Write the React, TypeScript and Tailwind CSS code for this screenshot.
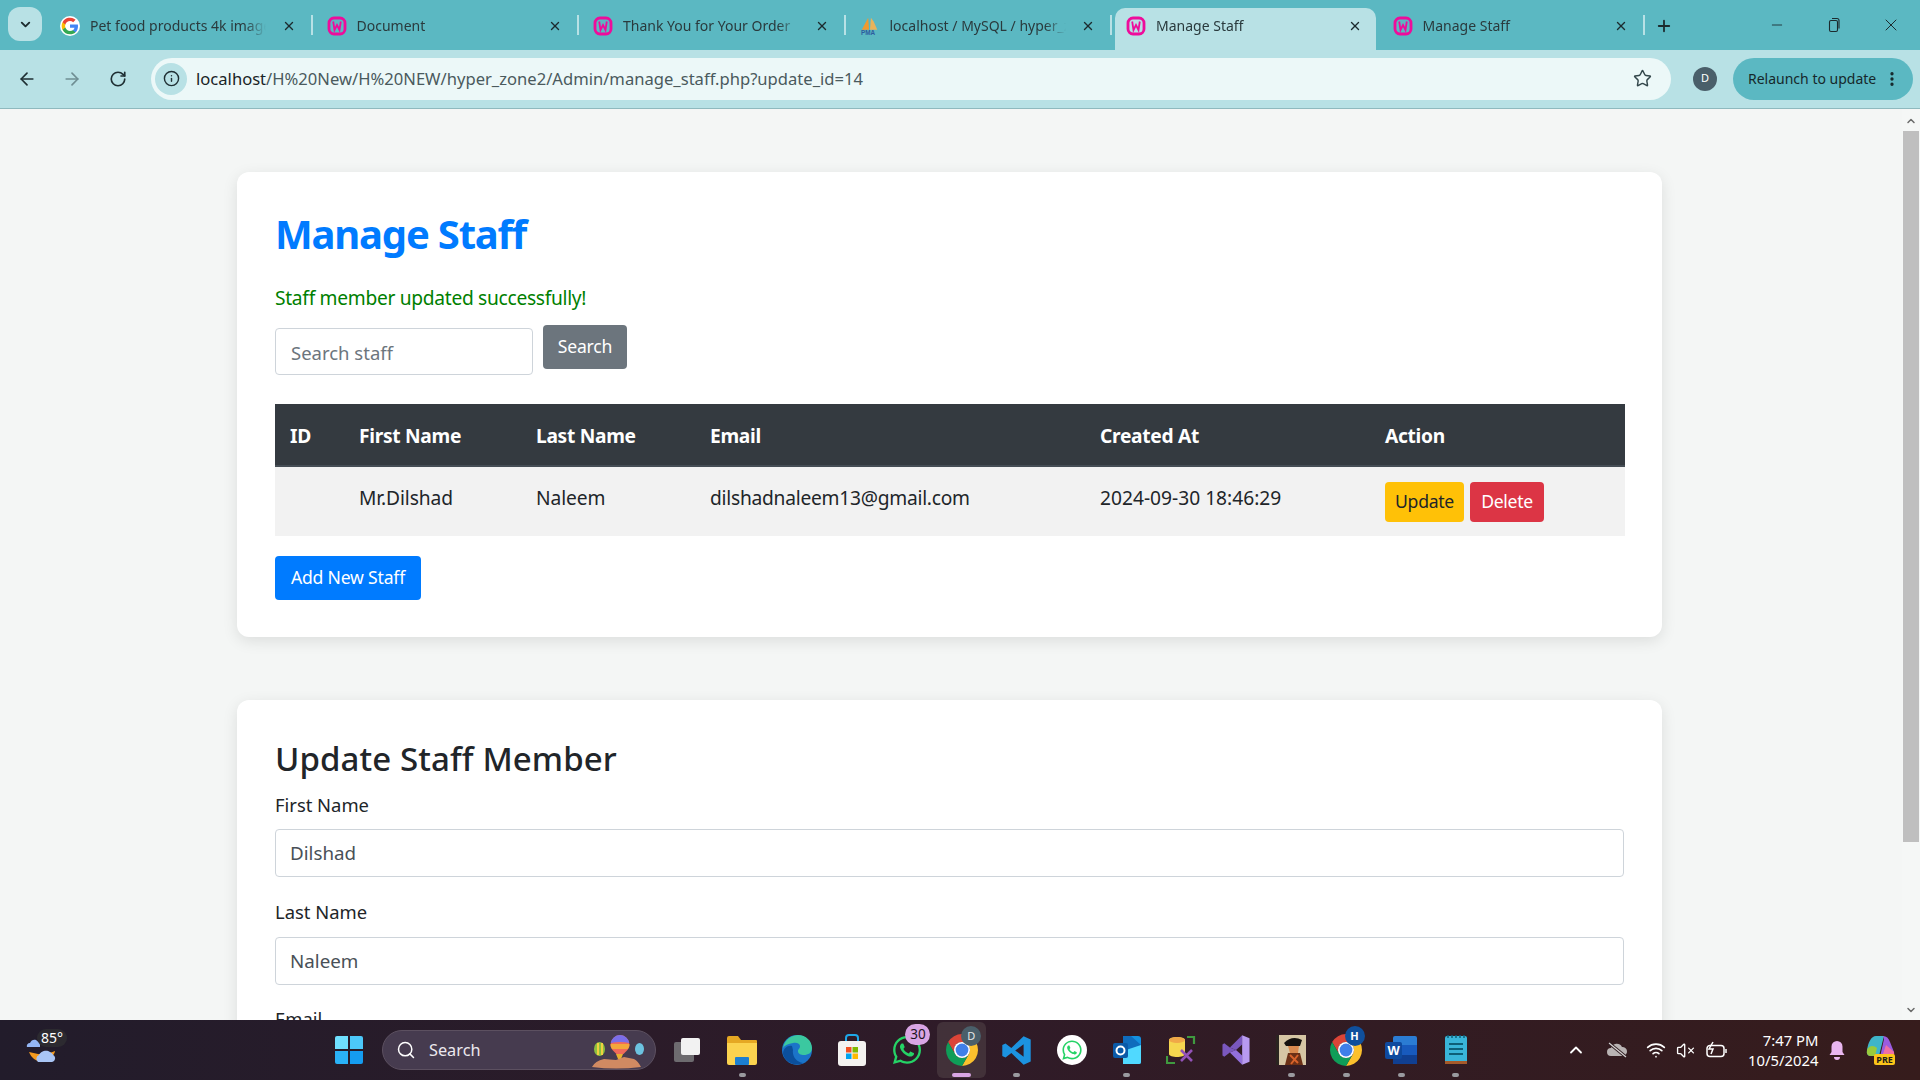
import React from 'react';
import { ArrowLeft, ArrowRight, ChevronDown, ChevronUp, Info, Minus, MoreVertical, Plus, RotateCw, Search, Star, VolumeX, Wifi, X } from 'lucide-react';
import { FaWhatsapp } from 'react-icons/fa';

const font = 'font-["Noto_Sans",sans-serif]';

function WampIcon() {
    return (
        <svg width="20" height="20" viewBox="0 0 20 20" fill="none">
            <rect x="2" y="2" width="16" height="16" rx="5" stroke="#ee0c9b" strokeWidth="2.8" />
            <path d="M6.2 5.5l1.3 8.5 2.5-5 2.5 5 1.3-8.5" stroke="#ee0c9b" strokeWidth="1.8" />
        </svg>
    );
}

function GoogleIcon() {
    return (
        <svg width="20" height="20" viewBox="0 0 24 24">
            <circle cx="12" cy="12" r="12" fill="#fff" />
            <path fill="#4285F4" d="M21.6 12.2c0-.7-.1-1.4-.2-2H12v3.8h5.4a4.6 4.6 0 0 1-2 3v2.5h3.2c1.9-1.7 3-4.3 3-7.3z" />
            <path fill="#34A853" d="M12 22c2.7 0 5-.9 6.6-2.5l-3.2-2.5c-.9.6-2 1-3.4 1-2.6 0-4.8-1.8-5.6-4.1H3.1v2.6A10 10 0 0 0 12 22z" />
            <path fill="#FBBC05" d="M6.4 13.9a6 6 0 0 1 0-3.8V7.5H3.1a10 10 0 0 0 0 9z" />
            <path fill="#EA4335" d="M12 6c1.5 0 2.8.5 3.8 1.5l2.9-2.9A10 10 0 0 0 3.1 7.5l3.3 2.6C7.2 7.8 9.4 6 12 6z" />
        </svg>
    );
}

function PmaIcon() {
    return (
        <svg width="22" height="20" viewBox="0 0 22 20">
            <path d="M2 14L9 1l1 13z" fill="#f29a2e" />
            <path d="M11 14l1-13 3 4 4 9z" fill="#e9b35a" />
            <text x="1" y="19.5" fontSize="7" fontWeight="700" fill="#2d5c9e" fontFamily="Liberation Sans, sans-serif">PMA</text>
        </svg>
    );
}

function ChromeIcon({ size = 32 }: { size?: number }) {
    return (
        <svg width={size} height={size} viewBox="2 2 20 20">
            <path fill="#db4437" d="M3.34 7A10 10 0 0 1 20.66 7H12A5 5 0 0 0 7.67 14.5Z" />
            <path fill="#fbc02d" d="M20.66 7A10 10 0 0 1 12 22L16.33 14.5A5 5 0 0 0 12 7Z" />
            <path fill="#0f9d58" d="M12 22A10 10 0 0 1 3.34 7L7.67 14.5A5 5 0 0 0 16.33 14.5Z" />
            <circle cx="12" cy="12" r="5" fill="#fff" />
            <circle cx="12" cy="12" r="4" fill="#3f7fe8" />
        </svg>
    );
}

function Tab({ icon, title, active }: { icon: React.ReactNode; title: string; active?: boolean }) {
    return (
        <div className={`relative flex h-[42px] shrink-0 items-center pb-[7px] ${active ? 'mx-[3px] w-[260.5px] rounded-t-[10px] bg-[#b8e1e5] pl-[11px] pr-[14px]' : 'w-[266.5px] pl-[14px] pr-[17px]'}`}>
            <span className="flex w-[20px] shrink-0 justify-center">{icon}</span>
            <span className="ml-[10px] w-[176px] overflow-hidden whitespace-nowrap text-[14px] text-[#2a3a3d] [mask-image:linear-gradient(to_right,black_88%,transparent)]">{title}</span>
            <X size={14} strokeWidth={2.4} className="ml-auto text-[#1c2b2e]" />
            {!active && <span className="absolute right-0 top-[7px] h-[20px] w-[2px] bg-[#b8e1e5]" />}
        </div>
    );
}

function TaskIcon({ children, dot, className }: { children: React.ReactNode; dot?: boolean; className?: string }) {
    return (
        <div className={`relative flex h-[60px] w-[54.9px] shrink-0 items-center justify-center ${className ?? ''}`}>
            {children}
            {dot && <span className="absolute bottom-[3px] h-[4px] w-[7px] rounded-full bg-[#9a9a9f]" />}
        </div>
    );
}

function Field({ label, value, labelClass }: { label: string; value: string; labelClass: string }) {
    return (
        <>
            <label className={`block h-[24px] text-[18.4px] leading-[24px] text-[#212529] ${labelClass}`}>{label}</label>
            <input
                readOnly
                value={value}
                className="h-[48px] w-full rounded-[4px] border border-[#ced4da] bg-white px-[14px] text-[18.8px] text-[#495057] outline-none"
            />
        </>
    );
}

export default function App() {
    return (
        <div className={`flex h-screen w-full flex-col overflow-hidden bg-[#f4f6f5] ${font}`}>
            {/* Tab strip */}
            <div className="flex h-[50px] shrink-0 items-end bg-[#5bb8c2]">
                <div className="flex h-[50px] w-[46px] shrink-0 items-center justify-end pr-[4px]">
                    <div className="mb-[2px] flex h-[34px] w-[34px] items-center justify-center rounded-[12px] bg-[#b8e1e5]">
                        <ChevronDown size={15} strokeWidth={3} className="text-[#1c2b2e]" />
                    </div>
                </div>
                <Tab icon={<GoogleIcon />} title="Pet food products 4k images" />
                <Tab icon={<WampIcon />} title="Document" />
                <Tab icon={<WampIcon />} title="Thank You for Your Order" />
                <Tab icon={<PmaIcon />} title="localhost / MySQL / hyper_zone2" />
                <Tab icon={<WampIcon />} title="Manage Staff" active />
                <Tab icon={<WampIcon />} title="Manage Staff" />
                <div className="mb-[15px] ml-[10px] flex items-center text-[#1c2b2e]">
                    <Plus size={18} strokeWidth={2.4} />
                </div>
                <div className="mb-[15px] ml-auto flex items-center text-[#1c2b2e]">
                    <Minus size={16} strokeWidth={1.3} className="mr-[42px]" />
                    <svg width="14" height="16" viewBox="0 0 14 16" fill="none" stroke="#1c2b2e" strokeWidth="1.1" className="mr-[40px]">
                        <rect x="2.5" y="3.5" width="8" height="11" rx="1.5" />
                        <path d="M5 1.5h5a2 2 0 0 1 2 2v8" />
                    </svg>
                    <X size={20} strokeWidth={1.2} className="mr-[19px]" />
                </div>
            </div>

            {/* Toolbar */}
            <div className="flex h-[59px] shrink-0 items-center border-b border-[#8fb9be] bg-[#b8e1e5] pb-[1px]">
                <ArrowLeft size={20} strokeWidth={2} className="ml-[17px] text-[#1f2f33]" />
                <ArrowRight size={20} strokeWidth={2} className="ml-[25px] text-[#6f8e93]" />
                <RotateCw size={18} strokeWidth={2.2} className="ml-[27px] text-[#1f2f33]" />
                <div className="ml-[24px] flex h-[42px] w-[1520px] shrink-0 items-center rounded-full bg-[#ecf8f8] pl-[4px] pr-[19px]">
                    <div className="flex h-[32px] w-[32px] items-center justify-center rounded-full bg-[#b8e1e5]">
                        <Info size={17} strokeWidth={2} className="text-[#1f2f33]" />
                    </div>
                    <div className="ml-[9px] mt-[2px] whitespace-nowrap text-[16.6px] text-[#4a5a5d]">
                        <span className="text-[#1a2426]">localhost</span>/H%20New/H%20NEW/hyper_zone2/Admin/manage_staff.php?update_id=14
                    </div>
                    <Star size={19} strokeWidth={1.8} className="ml-auto text-[#33474b]" />
                </div>
                <div className="ml-[22px] flex h-[24px] w-[24px] shrink-0 items-center justify-center rounded-full bg-[#4a5f6a] text-[11px] text-white">D</div>
                <div className="ml-[16px] flex h-[42px] w-[180px] shrink-0 items-center rounded-full bg-[#5bb8c2] pl-[15px] text-[14px] text-[#16282b]">
                    <span className="whitespace-nowrap">Relaunch to update</span>
                    <MoreVertical size={18} strokeWidth={2.4} className="ml-[7px] text-[#16282b]" />
                </div>
            </div>

            {/* Page */}
            <div className="flex min-h-0 flex-1 overflow-hidden">
                <div className="min-w-0 flex-1 overflow-hidden pl-[237px] pr-[240px] pt-[63px]">
                    <div className="rounded-[12px] bg-white px-[38px] pb-[37px] pt-[38px] shadow-[0_4px_15px_rgba(0,0,0,0.1)]">
                        <h1 className="text-[40px] font-bold leading-[48px] tracking-[-1.2px] text-[#007bff]">Manage Staff</h1>
                        <p className="mt-[26px] h-[27px] text-[19.2px] leading-[27px] tracking-[-0.3px] text-[#008000]">Staff member updated successfully!</p>
                        <div className="mt-[14px] flex items-start gap-[10px]">
                            <input
                                placeholder="Search staff"
                                className="mt-[3px] h-[47px] w-[258px] rounded-[4px] border border-[#ced4da] bg-white px-[15px] pt-[1px] text-[18.5px] outline-none placeholder:text-[#6c757d]"
                            />
                            <button className="h-[44px] w-[84px] rounded-[4px] bg-[#6c757d] pb-[1px] text-[17.6px] tracking-[-0.2px] text-white">Search</button>
                        </div>
                        <table className="mt-[29px] w-full table-fixed border-collapse text-left text-[19.2px]">
                            <colgroup>
                                <col className="w-[69px]" />
                                <col className="w-[177px]" />
                                <col className="w-[174px]" />
                                <col className="w-[390px]" />
                                <col className="w-[285px]" />
                                <col className="w-[255px]" />
                            </colgroup>
                            <thead>
                                <tr className="h-[62px] border-b-2 border-[#454d55] bg-[#343a40] text-white">
                                    {['ID', 'First Name', 'Last Name', 'Email', 'Created At', 'Action'].map((h) => (
                                        <th key={h} className="px-[15px] pt-[3px] font-bold tracking-[-0.3px]">{h}</th>
                                    ))}
                                </tr>
                            </thead>
                            <tbody>
                                <tr className="h-[70px] bg-[#f2f2f2] text-[#212529]">
                                    <td className="px-[15px]"></td>
                                    <td className="px-[15px] pb-[6px] tracking-[-0.1px]">Mr.Dilshad</td>
                                    <td className="px-[15px] pb-[6px] tracking-[-0.1px]">Naleem</td>
                                    <td className="px-[15px] pb-[6px] tracking-[-0.25px]">dilshadnaleem13@gmail.com</td>
                                    <td className="px-[15px] pb-[6px]">2024-09-30 18:46:29</td>
                                    <td className="px-[15px]">
                                        <div className="flex gap-[6px]">
                                            <button className="h-[40px] w-[79px] rounded-[4px] bg-[#ffc107] text-[17.6px] tracking-[-0.3px] text-[#212529]">Update</button>
                                            <button className="h-[40px] w-[74px] rounded-[4px] bg-[#dc3545] text-[17.6px] tracking-[-0.3px] text-white">Delete</button>
                                        </div>
                                    </td>
                                </tr>
                            </tbody>
                        </table>
                        <button className="mt-[20px] h-[44px] w-[146px] rounded-[4px] bg-[#007bff] pb-[1px] text-[17.6px] tracking-[-0.2px] text-white">Add New Staff</button>
                    </div>

                    <div className="mt-[63px] rounded-[12px] bg-white px-[38px] pt-[40px] shadow-[0_4px_15px_rgba(0,0,0,0.1)]">
                        <h2 className="text-[33px] font-medium leading-[38px] tracking-[0.1px] text-[#212529]">Update Staff Member</h2>
                        <div className="mt-[15px]">
                            <Field label="First Name" value="Dilshad" labelClass="mb-[12px]" />
                        </div>
                        <div className="mt-[23px]">
                            <Field label="Last Name" value="Naleem" labelClass="mb-[13px]" />
                        </div>
                        <div className="mt-[22px]">
                            <Field label="Email" value="" labelClass="mb-[12px]" />
                        </div>
                    </div>
                </div>

                {/* Scrollbar */}
                <div className="flex w-[18px] shrink-0 flex-col items-center bg-[#f5f7f6]">
                    <ChevronUp size={12} strokeWidth={3} className="mt-[6px] text-[#6b6b6b]" />
                    <div className="mt-[4px] h-[711px] w-[16px] bg-[#bfbfbf]" />
                    <ChevronDown size={12} strokeWidth={3} className="mt-[162px] text-[#6b6b6b]" />
                </div>
            </div>

            {/* Taskbar */}
            <div className="relative flex h-[60px] shrink-0 items-center bg-gradient-to-r from-[#221c2b] via-[#2f1b28] to-[#361c1c] text-white">
                {/* Weather */}
                <div className="relative ml-[26px] h-[40px] w-[36px] shrink-0">
                    <svg width="36" height="36" viewBox="0 0 36 36" className="absolute left-0 top-[5px]">
                        <path d="M1 12a3 3 0 0 1 3-4c1-3 4-4 6-3 1 1 3 2 4 3v4z" fill="#94b6f4" />
                        <path d="M3 17c3 8 11 12 19 8 4-2 7-7 7-9-7 3-12 3-17 3z" fill="#f49a1d" />
                        <path d="M12 27a4 4 0 0 1 1-7c1-3 7-6 11-3 2 1 3 2 3 3 3 1 3 6-1 7z" fill="#a9c5f5" />
                    </svg>
                    <span className="absolute left-[11px] top-[-1px] flex h-[18px] items-center rounded-full bg-[#2c2a30] px-[4px] text-[14px] leading-[18px]">85°</span>
                </div>

                {/* Start */}
                <div className="ml-[273px] grid h-[28px] w-[28px] shrink-0 grid-cols-2 gap-[2px]">
                    <span className="rounded-tl-[2px] bg-[#6fe0ff]" />
                    <span className="rounded-tr-[2px] bg-[#4cc8fa]" />
                    <span className="rounded-bl-[2px] bg-[#2ab2f7]" />
                    <span className="rounded-br-[2px] bg-[#159cf0]" />
                </div>

                {/* Search pill */}
                <div className="relative ml-[19px] flex h-[40px] w-[274px] shrink-0 items-center rounded-full border border-[#5c5060] bg-[#463b4f] pl-[13px]">
                    <Search size={20} strokeWidth={1.8} className="text-white" />
                    <span className="ml-[13px] text-[16.3px] text-[#ece8ee]">Search</span>
                    <svg width="60" height="40" viewBox="0 0 60 40" className="absolute right-[6px] top-[-1px]">
                        <ellipse cx="10.5" cy="19" rx="5.5" ry="7" fill="#8cbf3f" />
                        <path d="M8 13h2v12H8zM12 13h2v12h-2z" fill="#f0d040" />
                        <path d="M21.5 15a9.5 10 0 0 1 19 0c0 4-4 7-6 9h-7c-2-2-6-5-6-9z" fill="#f06a5a" />
                        <path d="M21.6 14h18.800c0 2-.5 3.500-1.500 5H23c-1-1.500-1.400-3-1.400-5z" fill="#f3a63c" />
                        <path d="M21.7 13a9.500 10 0 0 1 18.600 0q-9.300-2-18.600 0z" fill="#7a6ee8" />
                        <path d="M27 24h7l-2 5h-3z" fill="#e8b030" />
                        <ellipse cx="50.5" cy="19" rx="4.5" ry="6" fill="#6cc3e0" />
                        <path d="M3 37q3-6 12-8l12 1 8-3 10 2q4 2 7 8-25 3-49 0z" fill="#d08a62" />
                    </svg>
                </div>

                {/* Pinned apps */}
                <div className="ml-[4px] flex items-center">
                    <TaskIcon>
                        <div className="relative h-[24px] w-[26px]">
                            <div className="absolute bottom-0 left-0 h-[20px] w-[20px] rounded-[2px] bg-[#6d6b6f]" />
                            <div className="absolute right-0 top-0 h-[17px] w-[19px] rounded-[2px] bg-[#f2f2f2]" />
                        </div>
                    </TaskIcon>
                    <TaskIcon dot>
                        <svg width="32" height="30" viewBox="0 0 32 30">
                            <path d="M1 3a2 2 0 0 1 2-2h9l3 4h15a1 1 0 0 1 1 1v4H1z" fill="#e5a823" />
                            <path d="M1 8h30v20a2 2 0 0 1-2 2H3a2 2 0 0 1-2-2z" fill="#fbd34f" />
                            <rect x="9" y="22" width="14" height="8" rx="1" fill="#1c7fd0" />
                        </svg>
                    </TaskIcon>
                    <TaskIcon>
                        <svg width="32" height="32" viewBox="0 0 32 32">
                            <circle cx="16" cy="16" r="15" fill="#1b74c9" />
                            <path d="M2 14C4 4 12 1 17 1c8 0 14 6 14 13 0 5-4 7-8 7-3 0-6-1-6-4 0-2 2-2 2-5 0-2-3-4-7-3C7 10 4 11 2 14z" fill="#3bc8a0" />
                            <path d="M12 16c-1 6 3 12 10 13-8 4-18-1-20-9 0-6 5-9 9-8z" fill="#0b4f9c" />
                        </svg>
                    </TaskIcon>
                    <TaskIcon>
                        <svg width="30" height="34" viewBox="0 0 30 34">
                            <path d="M9 8V5a3 3 0 0 1 3-3h6a3 3 0 0 1 3 3v3" fill="none" stroke="#1ea7e8" strokeWidth="2" />
                            <rect x="1" y="8" width="28" height="25" rx="3" fill="#f4f2f0" />
                            <rect x="9" y="14" width="5.5" height="5.5" fill="#f25022" />
                            <rect x="15.5" y="14" width="5.5" height="5.5" fill="#7fba00" />
                            <rect x="9" y="20.5" width="5.5" height="5.5" fill="#00a4ef" />
                            <rect x="15.5" y="20.5" width="5.5" height="5.5" fill="#ffb900" />
                        </svg>
                    </TaskIcon>
                    <TaskIcon>
                        <FaWhatsapp size={32} color="#25d366" />
                        <span className="absolute right-[4px] top-[4px] flex h-[21px] w-[25px] items-center justify-center rounded-full bg-[#d9a5e4] text-[13.5px] text-[#1c1420]">30</span>
                    </TaskIcon>
                    <TaskIcon>
                        <div className="absolute inset-x-[3px] inset-y-[2px] rounded-[6px] bg-[#4a3b40]/70" />
                        <div className="relative"><ChromeIcon /></div>
                        <span className="absolute right-[8px] top-[6px] flex h-[20px] w-[20px] items-center justify-center rounded-full bg-[#4a5f6a] text-[11px] text-[#e6e6e6]">D</span>
                        <span className="absolute bottom-[3px] h-[4px] w-[19px] rounded-full bg-[#d9a5e4]" />
                    </TaskIcon>
                    <TaskIcon dot>
                        <svg width="31" height="31" viewBox="0 0 24 24">
                            <path fillRule="evenodd" fill="#1c93e0" d="M23 3.5L17.5 1 8 10 3.5 6.5 1 7.8v8.4l2.5 1.3L8 14l9.5 9 5.5-2.5zM17.5 7.2L11 12l6.5 4.8z" />
                        </svg>
                    </TaskIcon>
                    <TaskIcon>
                        <div className="flex h-[30px] w-[30px] items-center justify-center rounded-full bg-white">
                            <FaWhatsapp size={22} color="#25d366" />
                        </div>
                    </TaskIcon>
                    <TaskIcon dot>
                        <svg width="30" height="30" viewBox="0 0 30 30">
                            <path d="M11 1h15a3 3 0 0 1 3 3v23a2 2 0 0 1-2 2H11z" fill="#1490df" />
                            <path d="M11 1l8 0 10 9v8H11z" fill="#0f6cbd" />
                            <path d="M11 16l18-6v17a2 2 0 0 1-2 2H11z" fill="#50d9ff" />
                            <rect x="1" y="8" width="15" height="15" rx="2" fill="#0a5aa8" />
                            <circle cx="8.5" cy="15.5" r="4" fill="none" stroke="#fff" strokeWidth="2" />
                        </svg>
                    </TaskIcon>
                    <TaskIcon>
                        <svg width="30" height="30" viewBox="0 0 30 30">
                            <path d="M3 5c0-4 16-4 16 0v14c0 4-16 4-16 0z" fill="#f5d64f" />
                            <ellipse cx="11" cy="5" rx="8" ry="3" fill="#f0a848" />
                            <path d="M21 2h7v7M1 21v7h8" fill="none" stroke="#3f9a3f" strokeWidth="2.2" />
                            <path d="M15 26l11-11M15 15l11 11" stroke="#9352b8" strokeWidth="2.6" />
                        </svg>
                    </TaskIcon>
                    <TaskIcon>
                        <svg width="30" height="32" viewBox="0 0 24 26">
                            <path fill="#7a58be" d="M1 8.5L2.5 7.5 7 11 12 13 7 15 2.5 18.5 1 17.5z" />
                            <path fill="#7a58be" d="M7 11L17 1v7.5L12 13z" />
                            <path fill="#9370dc" d="M7 15L17 25v-7.5L12 13z" />
                            <path fill="#b89af0" d="M17 1l6 2.5v19L17 25z" />
                        </svg>
                    </TaskIcon>
                    <TaskIcon dot>
                        <svg width="30" height="30" viewBox="0 0 30 30">
                            <rect width="30" height="30" fill="#d6c6a4" />
                            <path d="M0 0h3v30H0z" fill="#2a2420" />
                            <path d="M8 8q8-8 18-3l-2 6H10z" fill="#15110e" />
                            <path d="M12 11h11l-1 7h-8z" fill="#d98a4e" />
                            <path d="M9 30l3-12h12l3 12z" fill="#6b3016" />
                            <path d="M14 20l8 8M22 20l-7 9" stroke="#d8622a" strokeWidth="2" />
                        </svg>
                    </TaskIcon>
                    <TaskIcon dot>
                        <ChromeIcon />
                        <span className="absolute right-[9px] top-[6px] flex h-[20px] w-[20px] items-center justify-center rounded-full bg-[#0f4f9c] text-[11px] font-bold text-white">H</span>
                    </TaskIcon>
                    <TaskIcon dot>
                        <svg width="32" height="30" viewBox="0 0 32 30">
                            <rect x="8" y="1" width="24" height="28" rx="2" fill="#2b7cd3" />
                            <rect x="8" y="10" width="24" height="10" fill="#185abd" />
                            <rect x="8" y="20" width="24" height="9" fill="#103f91" />
                            <rect x="0" y="7" width="17" height="17" rx="2" fill="#0f4a9e" />
                            <text x="2.5" y="20" fontSize="13" fontWeight="700" fill="#fff" fontFamily="Liberation Sans, sans-serif">W</text>
                        </svg>
                    </TaskIcon>
                    <TaskIcon dot>
                        <svg width="24" height="32" viewBox="0 0 24 32">
                            <rect x="1" y="2" width="22" height="28" rx="2" fill="#39b5d9" />
                            <rect x="1" y="27" width="22" height="3" fill="#a55a2a" />
                            <path d="M5 10h14M5 15h14M5 20h14" stroke="#0d5f78" strokeWidth="2" />
                            <path d="M4 1v3M8 1v3M12 1v3M16 1v3M20 1v3" stroke="#0d5f78" strokeWidth="1.5" />
                        </svg>
                    </TaskIcon>
                </div>

                {/* System tray */}
                <div className="ml-[83px] flex items-center">
                    <ChevronUp size={20} strokeWidth={2.2} className="text-white" />
                    <svg width="22" height="16" viewBox="0 0 22 16" className="ml-[20px]">
                        <path d="M5 14a4 4 0 0 1 0-8 6 6 0 0 1 11-1 4.5 4.5 0 0 1 1 9z" fill="#b9b3b3" />
                        <path d="M3 1l17 14" stroke="#2f1c20" strokeWidth="3" />
                        <path d="M3 1l17 14" stroke="#d8d4d4" strokeWidth="1.2" />
                    </svg>
                    <Wifi size={20} strokeWidth={2} className="ml-[18px] text-white" />
                    <VolumeX size={19} strokeWidth={1.7} className="ml-[10px] text-white" />
                    <svg width="22" height="18" viewBox="0 0 22 18" fill="none" stroke="#fff" strokeWidth="1.5" className="ml-[11px]">
                        <rect x="1" y="4.5" width="17" height="11" rx="3" />
                        <path d="M20 8v4" />
                        <path d="M7 1L3 8h4l-2 5" />
                    </svg>
                </div>
                <div className="ml-[18px] w-[72px] whitespace-nowrap text-right text-[14.8px] leading-[20px] text-white">
                    <div>7:47 PM</div>
                    <div>10/5/2024</div>
                </div>
                <svg width="18" height="20" viewBox="0 0 18 20" fill="#e9b6ef" className="ml-[10px]">
                    <path d="M9 1a5.5 5.5 0 0 1 5.5 5.5V12l2 3H1.5l2-3V6.5A5.5 5.5 0 0 1 9 1z" />
                    <path d="M6 17h6a3 3 0 0 1-6 0z" />
                </svg>
                <div className="relative ml-[20px] h-[30px] w-[30px]">
                    <svg width="30" height="26" viewBox="0 0 30 26">
                        <path d="M10 1h8l-5 20H5q-5 0-4-6C2 8 5 1 10 1z" fill="#3fb5c9" />
                        <path d="M1 15C3 10 8 10 11 13l-2 8H5q-5 0-4-6z" fill="#9acb3c" />
                        <path d="M17 1q5 0 7 6l4 10q1 5-4 5H14l4-18z" fill="#9a5ce0" />
                        <path d="M20 10l8 7q1 5-4 5h-8z" fill="#ef6fa5" />
                    </svg>
                    <span className="absolute bottom-[0px] left-[8px] rounded-[2px] bg-[#fcc419] px-[2px] text-[9px] font-bold leading-[11px] text-[#1b1b1b]">PRE</span>
                </div>
            </div>
        </div>
    );
}
